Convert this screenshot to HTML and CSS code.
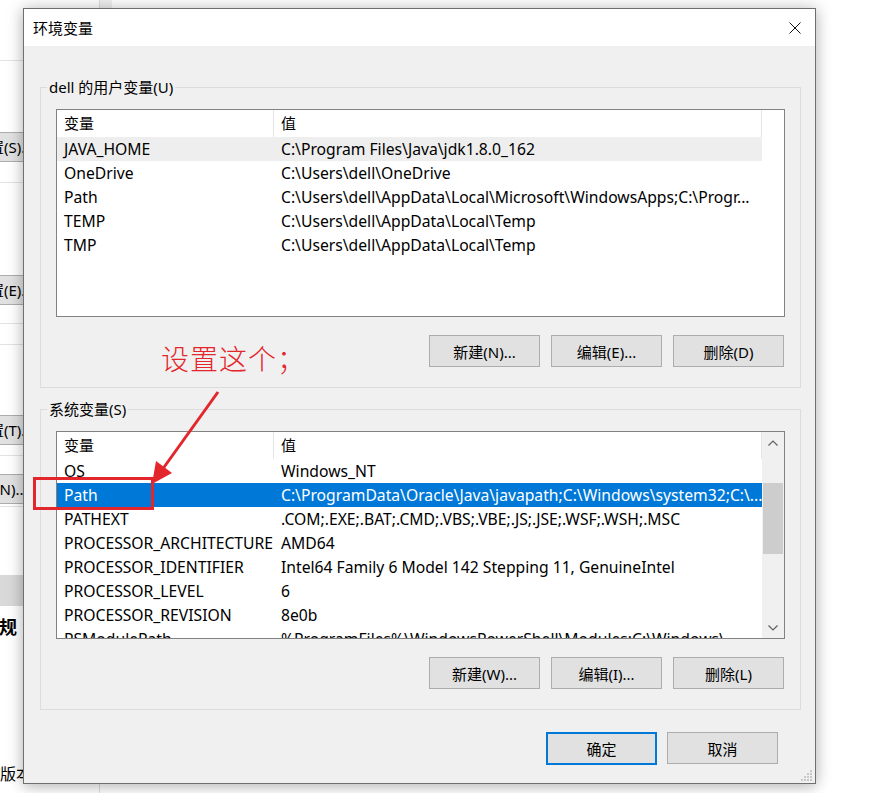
FILE: index.html
```html
<!DOCTYPE html>
<html lang="zh-CN">
<head>
<meta charset="utf-8">
<title>环境变量</title>
<link rel="stylesheet" href="styles.css">
</head>
<body>
<div class="desktop">
  <div class="bgwin">
    <div class="bg-line l1"></div>
    <div class="bgbtn b1">设置(S)...</div>
    <div class="bg-line l3"></div>
    <div class="bgbtn b2">设置(E)...</div>
    <div class="bg-line l4"></div>
    <div class="bg-line l5"></div>
    <div class="bgbtn b3">设置(T)...</div>
    <div class="bg-line l6"></div>
    <div class="bgbtn b4">环境变量(N)...</div>
    <div class="bg-line l7"></div>
    <div class="bgband"></div>
    <div class="bgtitle">常规</div>
    <div class="bgver">版本</div>
  </div>
  <div class="bgscroll"></div>

  <div class="dialog">
    <div class="titlebar">
      <span class="title">环境变量</span>
      <span class="close"><svg width="12" height="12" viewBox="0 0 12 12"><path d="M0.5 0.5 L11.5 11.5 M11.5 0.5 L0.5 11.5" stroke="#111" stroke-width="1" fill="none"/></svg></span>
    </div>
    <div class="body">
      <fieldset class="group g1">
        <legend>dell 的用户变量(U)</legend>
        <div class="listview">
          <div class="cols">
            <div class="lv-head"><div class="hc">变量</div><div class="hc">值</div></div>
            <div class="lv-row soft"><div>JAVA_HOME</div><div>C:\Program Files\Java\jdk1.8.0_162</div></div>
            <div class="lv-row"><div>OneDrive</div><div>C:\Users\dell\OneDrive</div></div>
            <div class="lv-row"><div>Path</div><div>C:\Users\dell\AppData\Local\Microsoft\WindowsApps;C:\Progr...</div></div>
            <div class="lv-row"><div>TEMP</div><div>C:\Users\dell\AppData\Local\Temp</div></div>
            <div class="lv-row"><div>TMP</div><div>C:\Users\dell\AppData\Local\Temp</div></div>
          </div>
          <div class="noscroll"></div>
        </div>
        <div class="btnrow">
          <button class="btn">新建(N)...</button>
          <button class="btn">编辑(E)...</button>
          <button class="btn">删除(D)</button>
        </div>
      </fieldset>

      <fieldset class="group g2">
        <legend>系统变量(S)</legend>
        <div class="listview">
          <div class="cols">
            <div class="lv-head"><div class="hc">变量</div><div class="hc">值</div></div>
            <div class="lv-row"><div>OS</div><div>Windows_NT</div></div>
            <div class="lv-row sel"><div>Path</div><div>C:\ProgramData\Oracle\Java\javapath;C:\Windows\system32;C:\...</div></div>
            <div class="lv-row"><div>PATHEXT</div><div>.COM;.EXE;.BAT;.CMD;.VBS;.VBE;.JS;.JSE;.WSF;.WSH;.MSC</div></div>
            <div class="lv-row"><div>PROCESSOR_ARCHITECTURE</div><div>AMD64</div></div>
            <div class="lv-row"><div>PROCESSOR_IDENTIFIER</div><div>Intel64 Family 6 Model 142 Stepping 11, GenuineIntel</div></div>
            <div class="lv-row"><div>PROCESSOR_LEVEL</div><div>6</div></div>
            <div class="lv-row"><div>PROCESSOR_REVISION</div><div>8e0b</div></div>
            <div class="lv-row"><div>PSModulePath</div><div>%ProgramFiles%\WindowsPowerShell\Modules;C:\Windows\...</div></div>
          </div>
          <div class="vscroll">
            <div class="arrow"><svg width="10" height="6" viewBox="0 0 10 6"><path d="M0.5 5.5 L5 1 L9.5 5.5" stroke="#606060" stroke-width="1.2" fill="none"/></svg></div>
            <div class="track"><div class="thumb"></div></div>
            <div class="arrow"><svg width="10" height="6" viewBox="0 0 10 6"><path d="M0.5 0.5 L5 5 L9.5 0.5" stroke="#606060" stroke-width="1.2" fill="none"/></svg></div>
          </div>
        </div>
        <div class="btnrow">
          <button class="btn">新建(W)...</button>
          <button class="btn">编辑(I)...</button>
          <button class="btn">删除(L)</button>
        </div>
      </fieldset>

      <div class="footer">
        <button class="btn default">确定</button>
        <button class="btn">取消</button>
      </div>
    </div>
    <svg class="grip" width="12" height="12" viewBox="0 0 12 12" fill="#c8c8c8">
      <rect x="9" y="0" width="2" height="2"/>
      <rect x="6" y="3" width="2" height="2"/><rect x="9" y="3" width="2" height="2"/>
      <rect x="3" y="6" width="2" height="2"/><rect x="6" y="6" width="2" height="2"/><rect x="9" y="6" width="2" height="2"/>
      <rect x="0" y="9" width="2" height="2"/><rect x="3" y="9" width="2" height="2"/><rect x="6" y="9" width="2" height="2"/><rect x="9" y="9" width="2" height="2"/>
    </svg>
  </div>

  <div class="note">设置这个；</div>
  <svg class="marks" width="877" height="793" viewBox="0 0 877 793">
    <line x1="218" y1="392" x2="162" y2="470" stroke="#e3262b" stroke-width="3"/>
    <polygon points="152,484 156,461 172,473" fill="#e3262b"/>
    <rect x="34.5" y="478.5" width="118" height="30" fill="none" stroke="#e3262b" stroke-width="3"/>
  </svg>
</div>
</body>
</html>
```
FILE: styles.css
```css
* { box-sizing: border-box; }
html, body { margin: 0; padding: 0; }
body {
  width: 877px;
  height: 793px;
  overflow: hidden;
  background: #ffffff;
  font-family: "Noto Sans", "Noto Sans CJK SC", sans-serif;
  font-size: 15px;
  color: #000;
}
.desktop { position: relative; width: 877px; height: 793px; overflow: hidden; }

/* background window */
.bgwin {
  position: absolute;
  left: -60px;
  top: 0;
  width: 160px;
  height: 793px;
  background: #fff;
  border-right: 1px solid #dedede;
  display: flex;
  flex-direction: column;
}
.bgscroll {
  position: absolute;
  left: 100px;
  top: 0;
  width: 12px;
  height: 20px;
  background: #f0f0f0;
}
.bg-line { height: 1px; background: #e3e3e3; flex: none; }
.l1 { margin-top: 60px; }
.bgbtn {
  height: 30px;
  background: #e1e1e1;
  border: 1px solid #adadad;
  font-size: 15px;
  line-height: 28px;
  white-space: nowrap;
  overflow: hidden;
  width: 120px;
  flex: none;
}
.b1 { margin-top: 71px; padding-left: 33px; }
.l3 { margin-top: 20px; }
.b2 { margin-top: 92px; padding-left: 33px; }
.l4 { margin-top: 18px; }
.l5 { margin-top: 20px; }
.b3 { margin-top: 70px; padding-left: 33px; }
.l6 { margin-top: 10px; }
.b4 { margin-top: 18px; padding-left: 0; text-indent: -6px; }
.l7 { margin-top: 2px; }
.bgband { margin-top: 68px; height: 31px; background: #d9d9d9; flex: none; }
.bgtitle { margin-top: 9px; padding-left: 41px; font-weight: 700; font-size: 18px; line-height: 24px; }
.bgver { margin-top: 124px; padding-left: 60px; font-size: 16px; line-height: 22px; }

/* dialog */
.dialog {
  position: absolute;
  left: 23px;
  top: 8px;
  width: 793px;
  height: 776px;
  border: 1px solid #6f6f6f;
  background: #f0f0f0;
  box-shadow: 0 0 16px rgba(0,0,0,0.22), 0 4px 12px rgba(0,0,0,0.12);
  display: flex;
  flex-direction: column;
}
.titlebar {
  height: 37px;
  background: #fff;
  display: flex;
  align-items: center;
  justify-content: space-between;
  padding-left: 9px;
  flex: none;
}
.title { font-size: 15px; line-height: 20px; }
.close {
  width: 40px;
  height: 37px;
  display: flex;
  align-items: center;
  justify-content: center;
}
.body {
  flex: 1;
  padding: 0 14px 0 16px;
  display: flex;
  flex-direction: column;
}
.group {
  margin: 0;
  border: 1px solid #dcdcdc;
  padding: 12px 15px 20px 15px;
  min-width: 0;
  width: 761px;
}
.g1 { margin-top: 31px; }
.g2 { margin-top: 11px; }
.group legend {
  padding: 0 2px;
  margin-left: -9px;
  line-height: 20px;
  height: 20px;
  font-size: 15px;
}
.listview {
  height: 208px;
  border: 1px solid #828282;
  background: #fff;
  display: flex;
  overflow: hidden;
}
.cols { width: 705px; flex: none; }
.noscroll { flex: 1; }
.lv-head, .lv-row {
  display: grid;
  grid-template-columns: 217px 488px;
}
.lv-head { height: 27px; }
.lv-head .hc {
  padding-left: 7px;
  line-height: 27px;
  border-right: 1px solid #e5e5e5;
}
.lv-row { height: 24px; line-height: 24px; font-size: 15.7px; }
.lv-row > div {
  padding-left: 7px;
  white-space: nowrap;
  overflow: hidden;
}
.lv-row.soft { background: #eeeeee; }
.lv-row.sel { background: #0078d7; color: #fff; }

.vscroll {
  flex: 1;
  background: #f0f0f0;
  display: flex;
  flex-direction: column;
}
.arrow {
  height: 21px;
  display: flex;
  align-items: center;
  justify-content: center;
  flex: none;
}
.track { flex: 1; padding: 30px 1px 0 1px; }
.thumb { height: 71px; background: #cdcdcd; }

.btnrow {
  display: flex;
  justify-content: flex-end;
  gap: 11px;
  margin-top: 18px;
  padding-right: 1px;
}
.btn {
  width: 111px;
  height: 32px;
  background: #e1e1e1;
  border: 1px solid #adadad;
  font-family: inherit;
  font-size: 15px;
  color: #000;
  padding: 0;
  margin: 0;
}
.btn.default { border: 2px solid #0078d7; height: 33px; }
.footer {
  display: flex;
  justify-content: flex-end;
  gap: 10px;
  margin-top: 22px;
  padding-right: 23px;
}
.grip { position: absolute; right: 2px; bottom: 1px; }

/* annotations */
.note {
  position: absolute;
  left: 161px;
  top: 340px;
  font-size: 28px;
  line-height: 38px;
  color: #e3262b;
  letter-spacing: 1px;
  font-weight: 300;
}
.marks { position: absolute; left: 0; top: 0; pointer-events: none; }
```
